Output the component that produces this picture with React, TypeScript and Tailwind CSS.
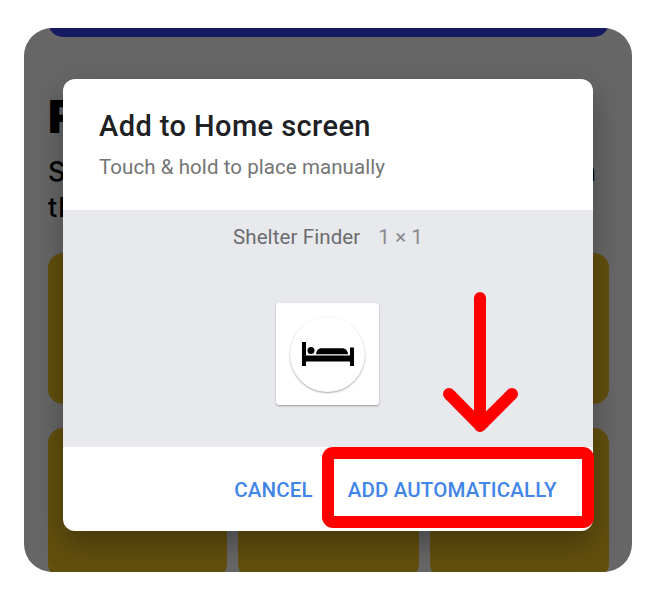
function BedIcon() {
  return (
    <svg viewBox="0 0 52 24" className="h-6 w-[52px]" fill="#000">
      <path d="M0 0h4v13.500h44V5.500h4V24h-4v-4.500H4V24H0z" />
      <circle cx="9" cy="8.600" r="3.500" />
      <path d="M14 12.200c.3-3.800 2.300-6 5.500-6H40c3.500 0 5.700 2.200 6 6z" />
    </svg>
  );
}

function Backdrop() {
  return (
    <div className="flex h-full flex-col pr-[23px] pl-6 font-['Inter',sans-serif] text-black">
      <div className="h-[9px] shrink-0 overflow-hidden">
        <div className="-mt-6 h-[33px] rounded-b-[15px] bg-[#161a62]" />
      </div>
      <div className="mt-[51px] h-[66px] shrink-0 text-[46px] leading-[56px] font-black">F</div>
      <div className="flex h-9 shrink-0 items-center justify-between text-[27px] leading-9">
        <span className="font-medium">S</span>
        <span className="mr-[13px] font-medium">n</span>
      </div>
      <div className="h-9 shrink-0 text-[27px] leading-9 font-medium tracking-[1px]">th</div>
      <div className="mt-[27px] grid shrink-0 grid-cols-[179px_181px_179px] gap-x-[11px] gap-y-[24px]">
        {[0, 1, 2, 3, 4, 5].map((i) => (
          <div key={i} className="h-[151px] rounded-[15px] bg-[#624f0e]" />
        ))}
      </div>
    </div>
  );
}

export default function App() {
  return (
    <div className="h-[598px] w-[654px] overflow-hidden bg-white px-6 pt-7 font-['Roboto',sans-serif]">
      <div className="relative h-[544px] w-[608px] overflow-hidden rounded-[28px] bg-[#666]">
        <Backdrop />
        <div className="absolute top-[50.500px] left-[39.300px] flex h-[452px] w-[529.400px] flex-col overflow-hidden rounded-[12px] bg-white shadow-[0_12px_28px_rgba(0,0,0,0.3)]">
          <header className="h-[131px] shrink-0 pt-[29.500px] pl-[35.700px]">
            <h1 className="text-[29px] leading-[36px] font-medium tracking-[0.42px] whitespace-nowrap text-[#202124]">Add to Home screen</h1>
            <p className="mt-[9.600px] text-[20.500px] leading-[26px] tracking-[0.07px] whitespace-nowrap text-[#757575]">Touch &amp; hold to place manually</p>
          </header>
          <main className="flex h-[237.500px] shrink-0 flex-col items-center bg-[#e8e9ed]">
            <div className="mt-[14px] flex gap-[18px] text-[20.500px] leading-[26px] tracking-[0.1px] whitespace-nowrap">
              <span className="text-[#6b6c6f]">Shelter Finder</span>
              <span className="text-[#88898c]">1 × 1</span>
            </div>
            <div className="mt-[53px] flex h-[102px] w-[103px] items-center justify-center rounded-[3px] bg-white shadow-[0_1px_2px_rgba(0,0,0,0.35)]">
              <div className="mt-px flex h-[75px] w-[75px] items-center justify-center rounded-full bg-white shadow-[0_1px_2px_rgba(0,0,0,0.35)]">
                <BedIcon />
              </div>
            </div>
          </main>
          <footer className="flex flex-1 items-center justify-end pt-[3px] pr-[36px] text-[20.500px] font-medium tracking-[0.15px] whitespace-nowrap text-[#4285e8]">
            <button className="mr-[35px]">CANCEL</button>
            <button>ADD AUTOMATICALLY</button>
          </footer>
        </div>
        <svg className="absolute top-[260px] left-[416px] h-[148px] w-[80px]" viewBox="0 0 80 148" fill="none" stroke="#f00" strokeWidth="12" strokeLinecap="round" strokeLinejoin="round">
          <path d="M40 10v128M9 106l31.300 31.800L72 106" />
        </svg>
        <div className="absolute top-[419px] left-[298px] h-[81px] w-[272px] rounded-[11px] bg-[#f00]" style={{ clipPath: "path(evenodd, 'M0 0H272V81H0ZM12 12V69H260V12Z')" }} />
      </div>
    </div>
  );
}
